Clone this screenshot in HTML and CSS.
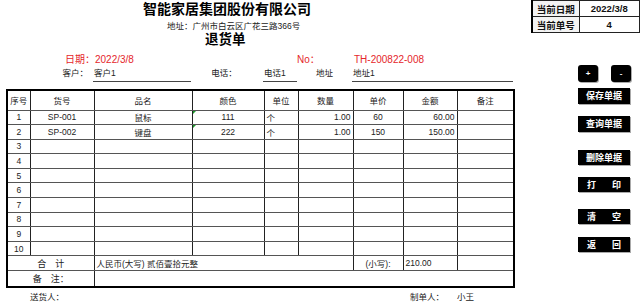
FILE: index.html
```html
<!DOCTYPE html>
<html lang="zh">
<head>
<meta charset="utf-8">
<link rel="stylesheet" href="styles.css">
</head>
<body>
<div class="page">
  <div class="sheet">
    <div class="company">智能家居集团股份有限公司</div>
    <div class="address">地址：广州市白云区广花三路366号</div>
    <div class="doc-title">退货单</div>
    <div class="cols date-row">
      <div class="date">日期：2022/3/8</div>
      <div class="no-label">No：</div>
      <div class="no-value">TH-200822-008</div>
    </div>
    <div class="cols info-row">
      <div class="lbl lbl-cust">客户：</div>
      <div class="val val-cust">客户1</div>
      <div class="lbl lbl-tel">电话：</div>
      <div class="val val-tel">电话1</div>
      <div class="lbl lbl-addr">地址</div>
      <div class="val val-addr">地址1</div>
    </div>
    <table class="items">
      <colgroup>
        <col class="c1"><col class="c2"><col class="c3"><col class="c4"><col class="c5"><col class="c6"><col class="c7"><col class="c8"><col class="c9">
      </colgroup>
      <thead>
        <tr class="head">
          <th>序号</th><th>货号</th><th>品名</th><th>颜色</th><th>单位</th><th>数量</th><th>单价</th><th>金额</th><th>备注</th>
        </tr>
      </thead>
      <tbody>
        <tr><td class="ctr">1</td><td class="ctr">SP-001</td><td class="ctr">鼠标</td><td class="ctr mark">111</td><td>个</td><td class="rt">1.00</td><td class="ctr">60</td><td class="rt">60.00</td><td></td></tr>
        <tr><td class="ctr">2</td><td class="ctr">SP-002</td><td class="ctr">键盘</td><td class="ctr mark">222</td><td>个</td><td class="rt">1.00</td><td class="ctr">150</td><td class="rt">150.00</td><td></td></tr>
        <tr><td class="ctr">3</td><td></td><td></td><td></td><td></td><td></td><td></td><td></td><td></td></tr>
        <tr><td class="ctr">4</td><td></td><td></td><td></td><td></td><td></td><td></td><td></td><td></td></tr>
        <tr><td class="ctr">5</td><td></td><td></td><td></td><td></td><td></td><td></td><td></td><td></td></tr>
        <tr><td class="ctr">6</td><td></td><td></td><td></td><td></td><td></td><td></td><td></td><td></td></tr>
        <tr><td class="ctr">7</td><td></td><td></td><td></td><td></td><td></td><td></td><td></td><td></td></tr>
        <tr><td class="ctr">8</td><td></td><td></td><td></td><td></td><td></td><td></td><td></td><td></td></tr>
        <tr><td class="ctr">9</td><td></td><td></td><td></td><td></td><td></td><td></td><td></td><td></td></tr>
        <tr><td class="ctr">10</td><td></td><td></td><td></td><td></td><td></td><td></td><td></td><td></td></tr>
        <tr class="sum"><td colspan="2" class="ctr big">合　计</td><td colspan="4">人民币(大写) 贰佰壹拾元整</td><td class="ctr">(小写):</td><td>210.00</td><td></td></tr>
        <tr class="note"><td colspan="2" class="ctr big">备　注：</td><td colspan="7"></td></tr>
      </tbody>
    </table>
    <div class="cols foot-row">
      <div class="sender">送货人：</div>
      <div class="maker">制单人：</div>
      <div class="maker-name">小王</div>
    </div>
  </div>
  <div class="side">
    <table class="current">
      <tr><th>当前日期</th><td>2022/3/8</td></tr>
      <tr><th>当前单号</th><td>4</td></tr>
    </table>
    <div class="btns">
      <div class="pm-row">
        <div class="pm">+</div>
        <div class="pm">-</div>
      </div>
      <div class="btn b-save">保存单据</div>
      <div class="btn b-query">查询单据</div>
      <div class="btn b-del">删除单据</div>
      <div class="btn wide b-print"><span>打</span><span>印</span></div>
      <div class="btn wide b-clear"><span>清</span><span>空</span></div>
      <div class="btn wide b-back"><span>返</span><span>回</span></div>
    </div>
  </div>
</div>
</body>
</html>
```

FILE: styles.css
```css
* { box-sizing: border-box; }
html, body { margin: 0; padding: 0; background: #fff; }
body {
  font-family: "Liberation Sans", "Noto Sans CJK SC", sans-serif;
  color: #222;
  width: 640px;
  height: 305px;
  overflow: hidden;
}
.page { display: flex; }
.sheet { width: 520px; flex: none; }

.company {
  height: 21px;
  line-height: 18px;
  padding-left: 143px;
  font-size: 14px;
  font-weight: bold;
  color: #000;
}
.address {
  height: 11px;
  line-height: 11px;
  padding-left: 167px;
  font-size: 8.5px;
  color: #222;
}
.doc-title {
  height: 16px;
  line-height: 16px;
  padding-left: 205px;
  font-size: 13.5px;
  font-weight: bold;
  color: #000;
}

.cols {
  display: grid;
  grid-template-columns: 6px 23px 64px 98px 72px 34px 55px 50px 54px 57px;
}
.date-row {
  margin-top: 5px;
  height: 13px;
  line-height: 13px;
  font-size: 10px;
  color: #e5262b;
}
.date { grid-column: 3 / 5; padding-left: 36px; }
.no-label { grid-column: 7; }
.no-value { grid-column: 8 / 11; padding-left: 2px; }

.info-row {
  height: 16px;
  font-size: 8.5px;
  line-height: 15px;
  margin-bottom: 7px;
}
.lbl { height: 16px; }
.val { height: 16px; border-bottom: 1px solid #444; padding-left: 1px; }
.lbl-cust { grid-column: 3; text-align: right; padding-right: 5px; }
.val-cust { grid-column: 4; }
.lbl-tel { grid-column: 5; text-align: center; padding-right: 6px; }
.val-tel { grid-column: 6; }
.lbl-addr { grid-column: 7; text-align: center; }
.val-addr { grid-column: 8 / 11; }

.items {
  margin-left: 6px;
  width: 507px;
  border-collapse: collapse;
  table-layout: fixed;
  border: 2px solid #000;
  font-size: 8.5px;
}
.c1 { width: 23px; }
.c2 { width: 64px; }
.c3 { width: 98px; }
.c4 { width: 72px; }
.c5 { width: 34px; }
.c6 { width: 55px; }
.c7 { width: 50px; }
.c8 { width: 54px; }
.c9 { width: 57px; }
.items th, .items td {
  border-left: 1px solid #222;
  border-right: 1px solid #222;
  border-top: 1px solid #555;
  border-bottom: 1px solid #555;
  padding: 0 2px;
  font-weight: normal;
  white-space: nowrap;
  overflow: hidden;
}
.items tr { height: 14.6px; }
.items tr.head { height: 20px; }
.items tr.sum { height: 15px; }
.items tr.note { height: 16px; }
.items tr.sum td, .items tr.note td { border-top: 1px solid #333; }
.items th { text-align: center; }
.ctr { text-align: center; }
.rt { text-align: right; }
.big { font-size: 9px; }
.mark { position: relative; }
.mark::before {
  content: "";
  position: absolute;
  left: 0;
  top: 0;
  border-top: 3px solid #1f9a2e;
  border-right: 3px solid transparent;
}

.foot-row {
  height: 19px;
  line-height: 19px;
  font-size: 8.5px;
}
.sender { grid-column: 3; padding-left: 1px; }
.maker { grid-column: 9; text-align: right; padding-right: 12px; }
.maker-name { grid-column: 10; padding-left: 1px; }

.side { flex: 1; display: flex; flex-direction: column; }
.current {
  margin-left: 11px;
  border-collapse: collapse;
  border-left: 2px solid #000;
  font-size: 9.5px;
  font-weight: bold;
  color: #111;
}
.current th, .current td {
  border: 1px solid #222;
  height: 16px;
  padding: 0;
  text-align: center;
}
.current th { width: 42px; background: #f3f3f3; }
.current td { width: 54px; }

.btns {
  margin-left: 58px;
  display: flex;
  flex-direction: column;
  align-items: flex-start;
}
.pm-row { display: flex; gap: 13px; margin-top: 32px; }
.pm {
  width: 20px;
  height: 17px;
  background: #000;
  color: #fff;
  border-radius: 3px;
  font-size: 8px;
  font-weight: bold;
  line-height: 17px;
  text-align: center;
  box-shadow: 1px 1px 0 #aaa;
}
.btn {
  width: 52px;
  height: 16px;
  background: #000;
  color: #fff;
  font-size: 9px;
  font-weight: bold;
  line-height: 16px;
  text-align: center;
  box-shadow: 1px 1px 0 #aaa;
  font-family: "Noto Sans CJK SC", sans-serif;
}
.btn.wide { display: flex; justify-content: center; gap: 16px; }
.b-save { margin-top: 6px; }
.b-query { margin-top: 12px; }
.b-del { margin-top: 18px; height: 15px; line-height: 15px; }
.b-print { margin-top: 12px; height: 15px; line-height: 15px; }
.b-clear { margin-top: 17px; height: 15px; line-height: 15px; }
.b-back { margin-top: 13px; height: 15px; line-height: 15px; }
```
